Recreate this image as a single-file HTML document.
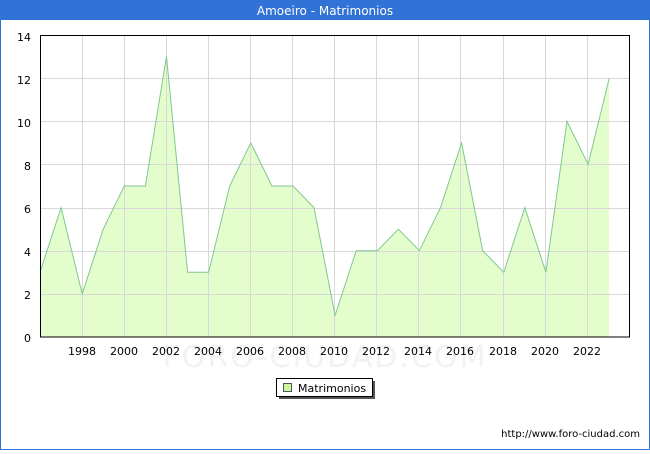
<!DOCTYPE html>
<html><head><style>
body{margin:0;width:650px;height:450px;overflow:hidden;background:#fff;font-family:"DejaVu Sans","Liberation Sans",sans-serif;}
</style></head><body>
<svg width="650" height="450" xmlns="http://www.w3.org/2000/svg" font-family="DejaVu Sans, Liberation Sans, sans-serif">
<rect x="0.5" y="0.5" width="649" height="449" fill="#fff" stroke="#3172d6"/>
<rect x="0" y="0" width="650" height="20" fill="#3172d6"/>
<text x="325" y="15" fill="#fff" font-size="12" text-anchor="middle">Amoeiro - Matrimonios</text>
<text x="325" y="367" font-size="30" fill="#f2f2f2" text-anchor="middle" letter-spacing="2">FORO-CIUDAD.COM</text>
<polygon fill="#e3fdcc" points="40,337 40,272.3 61.1,207.6 82.2,293.9 103.2,229.2 124.3,186 145.4,186 166.5,56.6 187.6,272.3 208.6,272.3 229.7,186 250.8,142.9 271.9,186 293,186 314,207.6 335.1,315.4 356.2,250.7 377.3,250.7 398.4,229.2 419.4,250.7 440.5,207.6 461.6,142.9 482.7,250.7 503.8,272.3 524.8,207.6 545.9,272.3 567,121.3 588.1,164.4 609.2,78.2 609.2,337"/>
<g stroke="#d8d8d8" stroke-width="1">
<line x1="40" y1="294.5" x2="630" y2="294.5"/><line x1="40" y1="251.5" x2="630" y2="251.5"/><line x1="40" y1="208.5" x2="630" y2="208.5"/><line x1="40" y1="164.5" x2="630" y2="164.5"/><line x1="40" y1="121.5" x2="630" y2="121.5"/><line x1="40" y1="78.5" x2="630" y2="78.5"/>
<line x1="82.5" y1="35" x2="82.5" y2="337"/><line x1="124.5" y1="35" x2="124.5" y2="337"/><line x1="166.5" y1="35" x2="166.5" y2="337"/><line x1="208.5" y1="35" x2="208.5" y2="337"/><line x1="250.5" y1="35" x2="250.5" y2="337"/><line x1="292.5" y1="35" x2="292.5" y2="337"/><line x1="334.5" y1="35" x2="334.5" y2="337"/><line x1="376.5" y1="35" x2="376.5" y2="337"/><line x1="418.5" y1="35" x2="418.5" y2="337"/><line x1="460.5" y1="35" x2="460.5" y2="337"/><line x1="503.5" y1="35" x2="503.5" y2="337"/><line x1="545.5" y1="35" x2="545.5" y2="337"/><line x1="587.5" y1="35" x2="587.5" y2="337"/>
</g>
<polyline fill="none" stroke="#80c890" stroke-width="1" points="40,272.3 61.1,207.6 82.2,293.9 103.2,229.2 124.3,186 145.4,186 166.5,56.6 187.6,272.3 208.6,272.3 229.7,186 250.8,142.9 271.9,186 293,186 314,207.6 335.1,315.4 356.2,250.7 377.3,250.7 398.4,229.2 419.4,250.7 440.5,207.6 461.6,142.9 482.7,250.7 503.8,272.3 524.8,207.6 545.9,272.3 567,121.3 588.1,164.4 609.2,78.2"/>
<rect x="40.5" y="35.5" width="589" height="301.5" fill="none" stroke="#000"/>
<g font-size="11" fill="#000" text-anchor="end">
<text x="31" y="41">14</text><text x="31" y="84">12</text><text x="31" y="127">10</text><text x="31" y="170">8</text><text x="31" y="213">6</text><text x="31" y="256">4</text><text x="31" y="299">2</text><text x="31" y="342">0</text>
</g>
<g font-size="11" fill="#000" text-anchor="middle">
<text x="82" y="355">1998</text><text x="124" y="355">2000</text><text x="166" y="355">2002</text><text x="208" y="355">2004</text><text x="250" y="355">2006</text><text x="292" y="355">2008</text><text x="334" y="355">2010</text><text x="376" y="355">2012</text><text x="418" y="355">2014</text><text x="460" y="355">2016</text><text x="503" y="355">2018</text><text x="545" y="355">2020</text><text x="587" y="355">2022</text>
</g>
<rect x="279" y="381" width="96" height="18" fill="#555"/>
<rect x="276.5" y="378.5" width="96" height="18" fill="#fff" stroke="#000"/>
<rect x="283.5" y="383.5" width="8" height="8" fill="#ccf7a0" stroke="#555"/>
<text x="298" y="392" font-size="11" fill="#000">Matrimonios</text>
<text x="640" y="437" font-size="10" fill="#000" text-anchor="end">http://www.foro-ciudad.com</text>
</svg>
</body></html>
